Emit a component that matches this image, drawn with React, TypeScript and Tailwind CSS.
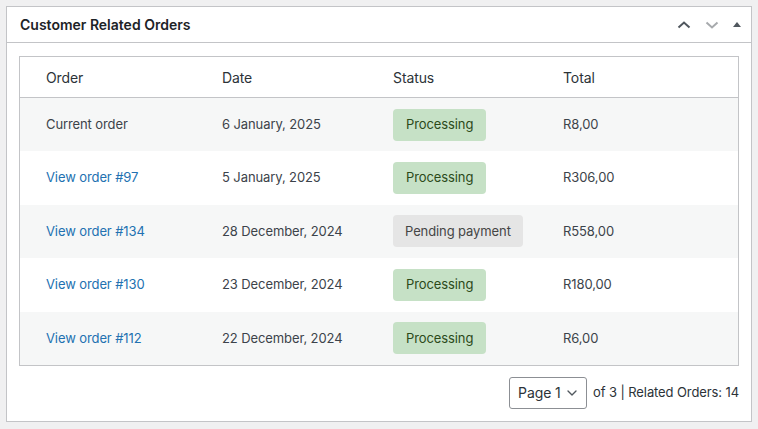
import { ChevronDown } from 'lucide-react';

type Row = {
  label: string;
  link: boolean;
  date: string;
  status: 'processing' | 'pending';
  total: string;
};

const rows: Row[] = [
  { label: 'Current order', link: false, date: '6 January, 2025', status: 'processing', total: 'R8,00' },
  { label: 'View order #97', link: true, date: '5 January, 2025', status: 'processing', total: 'R306,00' },
  { label: 'View order #134', link: true, date: '28 December, 2024', status: 'pending', total: 'R558,00' },
  { label: 'View order #130', link: true, date: '23 December, 2024', status: 'processing', total: 'R180,00' },
  { label: 'View order #112', link: true, date: '22 December, 2024', status: 'processing', total: 'R6,00' },
];

const cols = 'grid grid-cols-[176px_171px_170px_1fr] pl-[26px]';

function StatusBadge({ status }: { status: Row['status'] }) {
  if (status === 'pending') {
    return (
      <span className="inline-flex h-[32px] items-center rounded-[4px] bg-[#e5e5e5] px-[12px] text-[#454545]">
        Pending payment
      </span>
    );
  }
  return (
    <span className="inline-flex h-[32px] items-center rounded-[4px] bg-[#c6e1c6] px-[13px] text-[#2c4a1a]">
      Processing
    </span>
  );
}

export default function App() {
  return (
    <div
      className="min-h-screen bg-[#f0f0f1] p-[6px]"
      style={{ fontFamily: 'Inter, "Noto Sans", sans-serif' }}
    >
      <div className="w-[746px] border border-[#c3c4c7] bg-white">
        {/* Header */}
        <div className="flex h-[36px] items-center justify-between border-b border-[#c3c4c7] pl-[13px] pr-[7px]">
          <h2 className="text-[14px] font-semibold text-[#1d2327]">Customer Related Orders</h2>
          <div className="flex items-center gap-[8px]">
            <svg width="20" height="18" viewBox="0 0 20 18" className="text-[#50575e]">
              <path d="M4.5 11.5 L10 6.5 L15.5 11.5" fill="none" stroke="currentColor" strokeWidth="2" />
            </svg>
            <svg width="20" height="18" viewBox="0 0 20 18" className="text-[#a7aaad]">
              <path d="M4.5 6.5 L10 11.5 L15.5 6.5" fill="none" stroke="currentColor" strokeWidth="2" />
            </svg>
            <svg width="14" height="18" viewBox="0 0 14 18" className="text-[#50575e]">
              <path d="M3 11 L7 6 L11 11 Z" fill="currentColor" />
            </svg>
          </div>
        </div>

        {/* Body */}
        <div className="px-[12px] pb-[12px] pt-[13px]">
          <div className="border border-[#c3c4c7] text-[13px] tracking-[-0.1px] text-[#3c434a]">
            <div className={`${cols} h-[41px] items-center border-b border-[#c3c4c7] text-[14px] text-[#2c3338]`}>
              <div>Order</div>
              <div>Date</div>
              <div>Status</div>
              <div>Total</div>
            </div>
            {rows.map((r, i) => (
              <div
                key={r.label}
                className={`${cols} h-[53.4px] items-center ${i % 2 === 0 ? 'bg-[#f6f7f7]' : 'bg-white'}`}
              >
                <div className={r.link ? 'text-[#2271b1]' : ''}>{r.label}</div>
                <div>{r.date}</div>
                <div>
                  <StatusBadge status={r.status} />
                </div>
                <div>{r.total}</div>
              </div>
            ))}
          </div>

          {/* Pagination */}
          <div className="mt-[11px] flex items-center justify-end gap-[6px] text-[13px] tracking-[-0.1px] text-[#2c3338]">
            <div className="flex h-[32px] w-[78px] items-center justify-between rounded-[3px] border border-[#8c8f94] pl-[8px] pr-[6px] text-[14px] text-[#2c3338]">
              <span>Page 1</span>
              <ChevronDown size={16} strokeWidth={2} className="text-[#50575e]" />
            </div>
            <span>of 3 | Related Orders: 14</span>
          </div>
        </div>
      </div>
    </div>
  );
}
